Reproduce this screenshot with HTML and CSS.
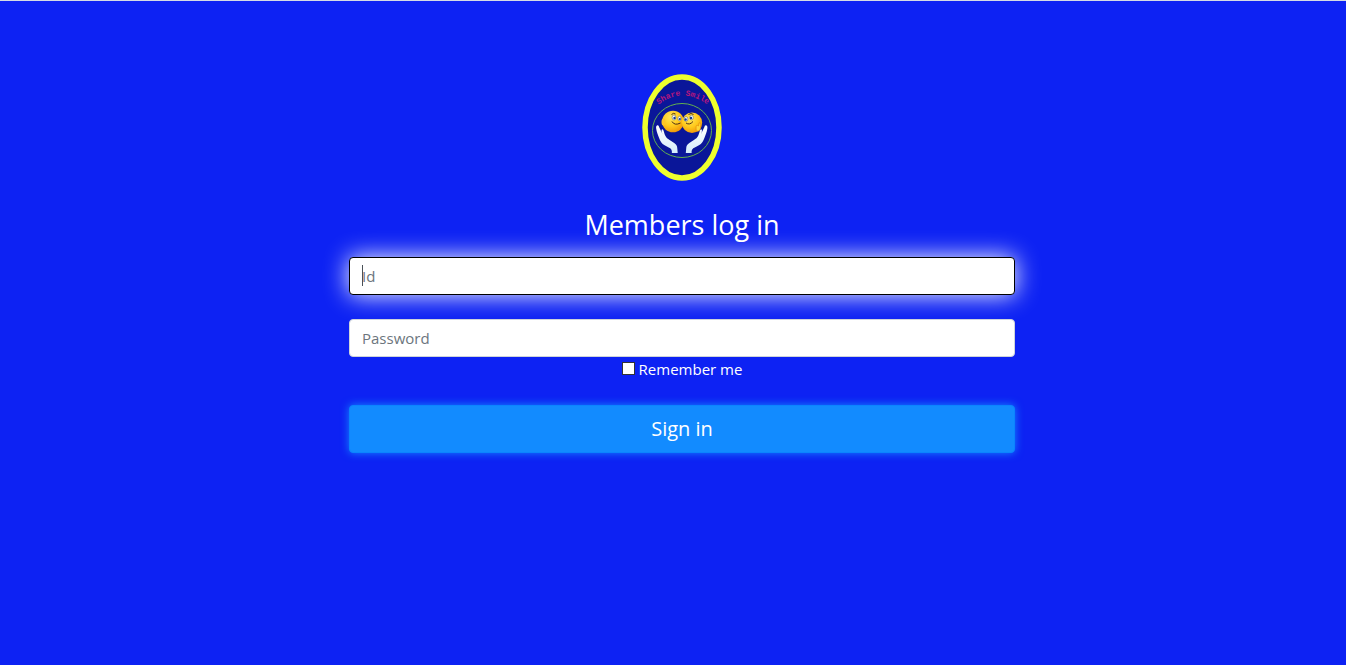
FILE: index.html
```html
<!DOCTYPE html>
<html lang="en">
<head>
<meta charset="utf-8">
<meta name="viewport" content="width=device-width, initial-scale=1">
<title>Members log in</title>
<link rel="stylesheet" href="styles.css">
</head>
<body>
<main class="page">
  <form class="login">
    <svg class="logo" viewBox="0 0 80 108" role="img" aria-label="Share Smile">
      <defs>
        <path id="arc" d="M16 31Q40 12 66 31"/>
        <radialGradient id="face" cx=".4" cy=".3" r=".75">
          <stop offset="0" stop-color="#ffe75a"/>
          <stop offset=".55" stop-color="#ffc91c"/>
          <stop offset="1" stop-color="#ee9208"/>
        </radialGradient>
        <linearGradient id="skin" x1="0" y1="0" x2="0" y2="1">
          <stop offset="0" stop-color="#fff"/>
          <stop offset="1" stop-color="#d5edfb"/>
        </linearGradient>
      </defs>
      <ellipse cx="40" cy="53.5" rx="37" ry="50.5" fill="#0a1699" stroke="#eeff2e" stroke-width="5.5"/>
      <text class="logo-text"><textPath href="#arc" startOffset="50%" text-anchor="middle">Share Smile</textPath></text>
      <ellipse cx="40" cy="56.5" rx="29.5" ry="27" fill="none" stroke="#62b04e" stroke-width="1"/>
      <path id="hand" fill="url(#skin)" d="M15 51.5c1.200-.8 1.800.4 2.200 1.800l3.400 7c-1.500-3-1.300-5.200-.2-5 1.400.4 1.600 3.800 2.800 6.300 1.100 2.200 2.400 3.300 4.400 4.500l4.600 3c2.400 1.600 3 3.200 3.100 5.300l.4 4.500h-5.800c.3-2.800-.8-4.700-3.200-5.500l-4.100-2.200c-3-1.400-4.300-4.200-5.500-7.200-1.100-2.900-2.400-6-2.900-9.300-.2-1.500-.2-2.800.8-3.200z"/>
      <use href="#hand" transform="matrix(-1 0 0 1 79.500 0)"/>
      <circle cx="31" cy="47.500" r="10.800" fill="url(#face)"/>
      <ellipse cx="21.500" cy="48" rx="2" ry="3.500" fill="#ffc526"/>
      <circle cx="50" cy="48.800" r="10.200" fill="url(#face)"/>
      <path d="M54 54q0-4 2.500-2l.5-3q1.500-1 1.800 1l-.5 5q-1 3-4 2z" fill="#ffd735" stroke="#e58e0b" stroke-width=".7"/>
      <g fill="#fff" stroke="#46526c" stroke-width=".5">
        <ellipse cx="32" cy="43.500" rx="1.900" ry="2.500"/>
        <ellipse cx="37.500" cy="44.500" rx="1.600" ry="2.200"/>
        <ellipse cx="44" cy="45" rx="1.900" ry="2.300"/>
        <ellipse cx="49.500" cy="43.500" rx="1.800" ry="2.300"/>
      </g>
      <g fill="#123a91">
        <circle cx="32.500" cy="44" r="1.200"/>
        <circle cx="37.800" cy="45" r="1.100"/>
        <circle cx="43.600" cy="45.500" r="1.200"/>
        <circle cx="49" cy="44" r="1.200"/>
      </g>
      <path d="M30 47.500q2.500 4.500 8.500 1.500M44 49q3.500 2.500 7-1.500M29.500 40.500q2-2 4-.5M46.500 40.500q2.500-2 5 0" fill="none" stroke="#4b2d16" stroke-width="1"/>
    </svg>
    <h1 class="title">Members log in</h1>
    <input class="field field-active" type="text" name="id" placeholder="Id" aria-label="Id">
    <input class="field" type="password" name="password" placeholder="Password" aria-label="Password">
    <label class="remember"><input class="tick" type="checkbox" name="remember">Remember me</label>
    <button class="submit" type="submit">Sign in</button>
  </form>
</main>
</body>
</html>
```
FILE: styles.css
```css
* {
  box-sizing: border-box;
}

body {
  margin: 0;
  min-height: 100vh;
  border-top: 1px solid #d5dbe5;
  background: #0d22f3;
  color: #fff;
  font: 15px/24px "Segoe UI", "Open Sans", "Noto Sans", sans-serif;
}

.page {
  padding: 73px 0 24px 18px;
}

.login {
  display: flex;
  flex-direction: column;
  align-items: center;
  width: 100%;
  max-width: 666px;
  margin: 0 auto;
}

.logo {
  width: 80px;
  height: 108px;
}

.logo-text {
  fill: #b5177e;
  font: bold 8px "Liberation Mono", monospace;
}

.title {
  margin: 26px 0 15px;
  font-size: 27px;
  font-weight: 400;
  line-height: 34px;
}

.field {
  width: 100%;
  height: 38px;
  margin: 0;
  padding: 6px 12px;
  border: 1px solid #ced4da;
  border-radius: 4px;
  background: #fff;
  color: #495057;
  font: inherit;
}

.field::placeholder {
  color: #6c757d;
  opacity: 1;
}

.field-active {
  margin-bottom: 24px;
  border-color: #000;
  background: linear-gradient(#495057, #495057) 12px 7px / 1px 21px no-repeat #fff;
  box-shadow: 0 0 25px #fff;
}

.remember {
  display: flex;
  align-items: center;
  gap: 4px;
  margin-bottom: 24px;
}

.tick {
  appearance: none;
  width: 13px;
  height: 13px;
  margin: 0 0 2px;
  border: 1px solid #333;
  background: #fff;
}

.tick:checked {
  background: #128bff;
}

.submit {
  width: 100%;
  height: 48px;
  padding: 8px 16px;
  border: 1px solid #0b84ff;
  border-radius: 4px;
  background: #128bff;
  box-shadow: 0 0 8px #128bff;
  color: #fff;
  font: inherit;
  font-size: 20px;
  line-height: 30px;
}
```
